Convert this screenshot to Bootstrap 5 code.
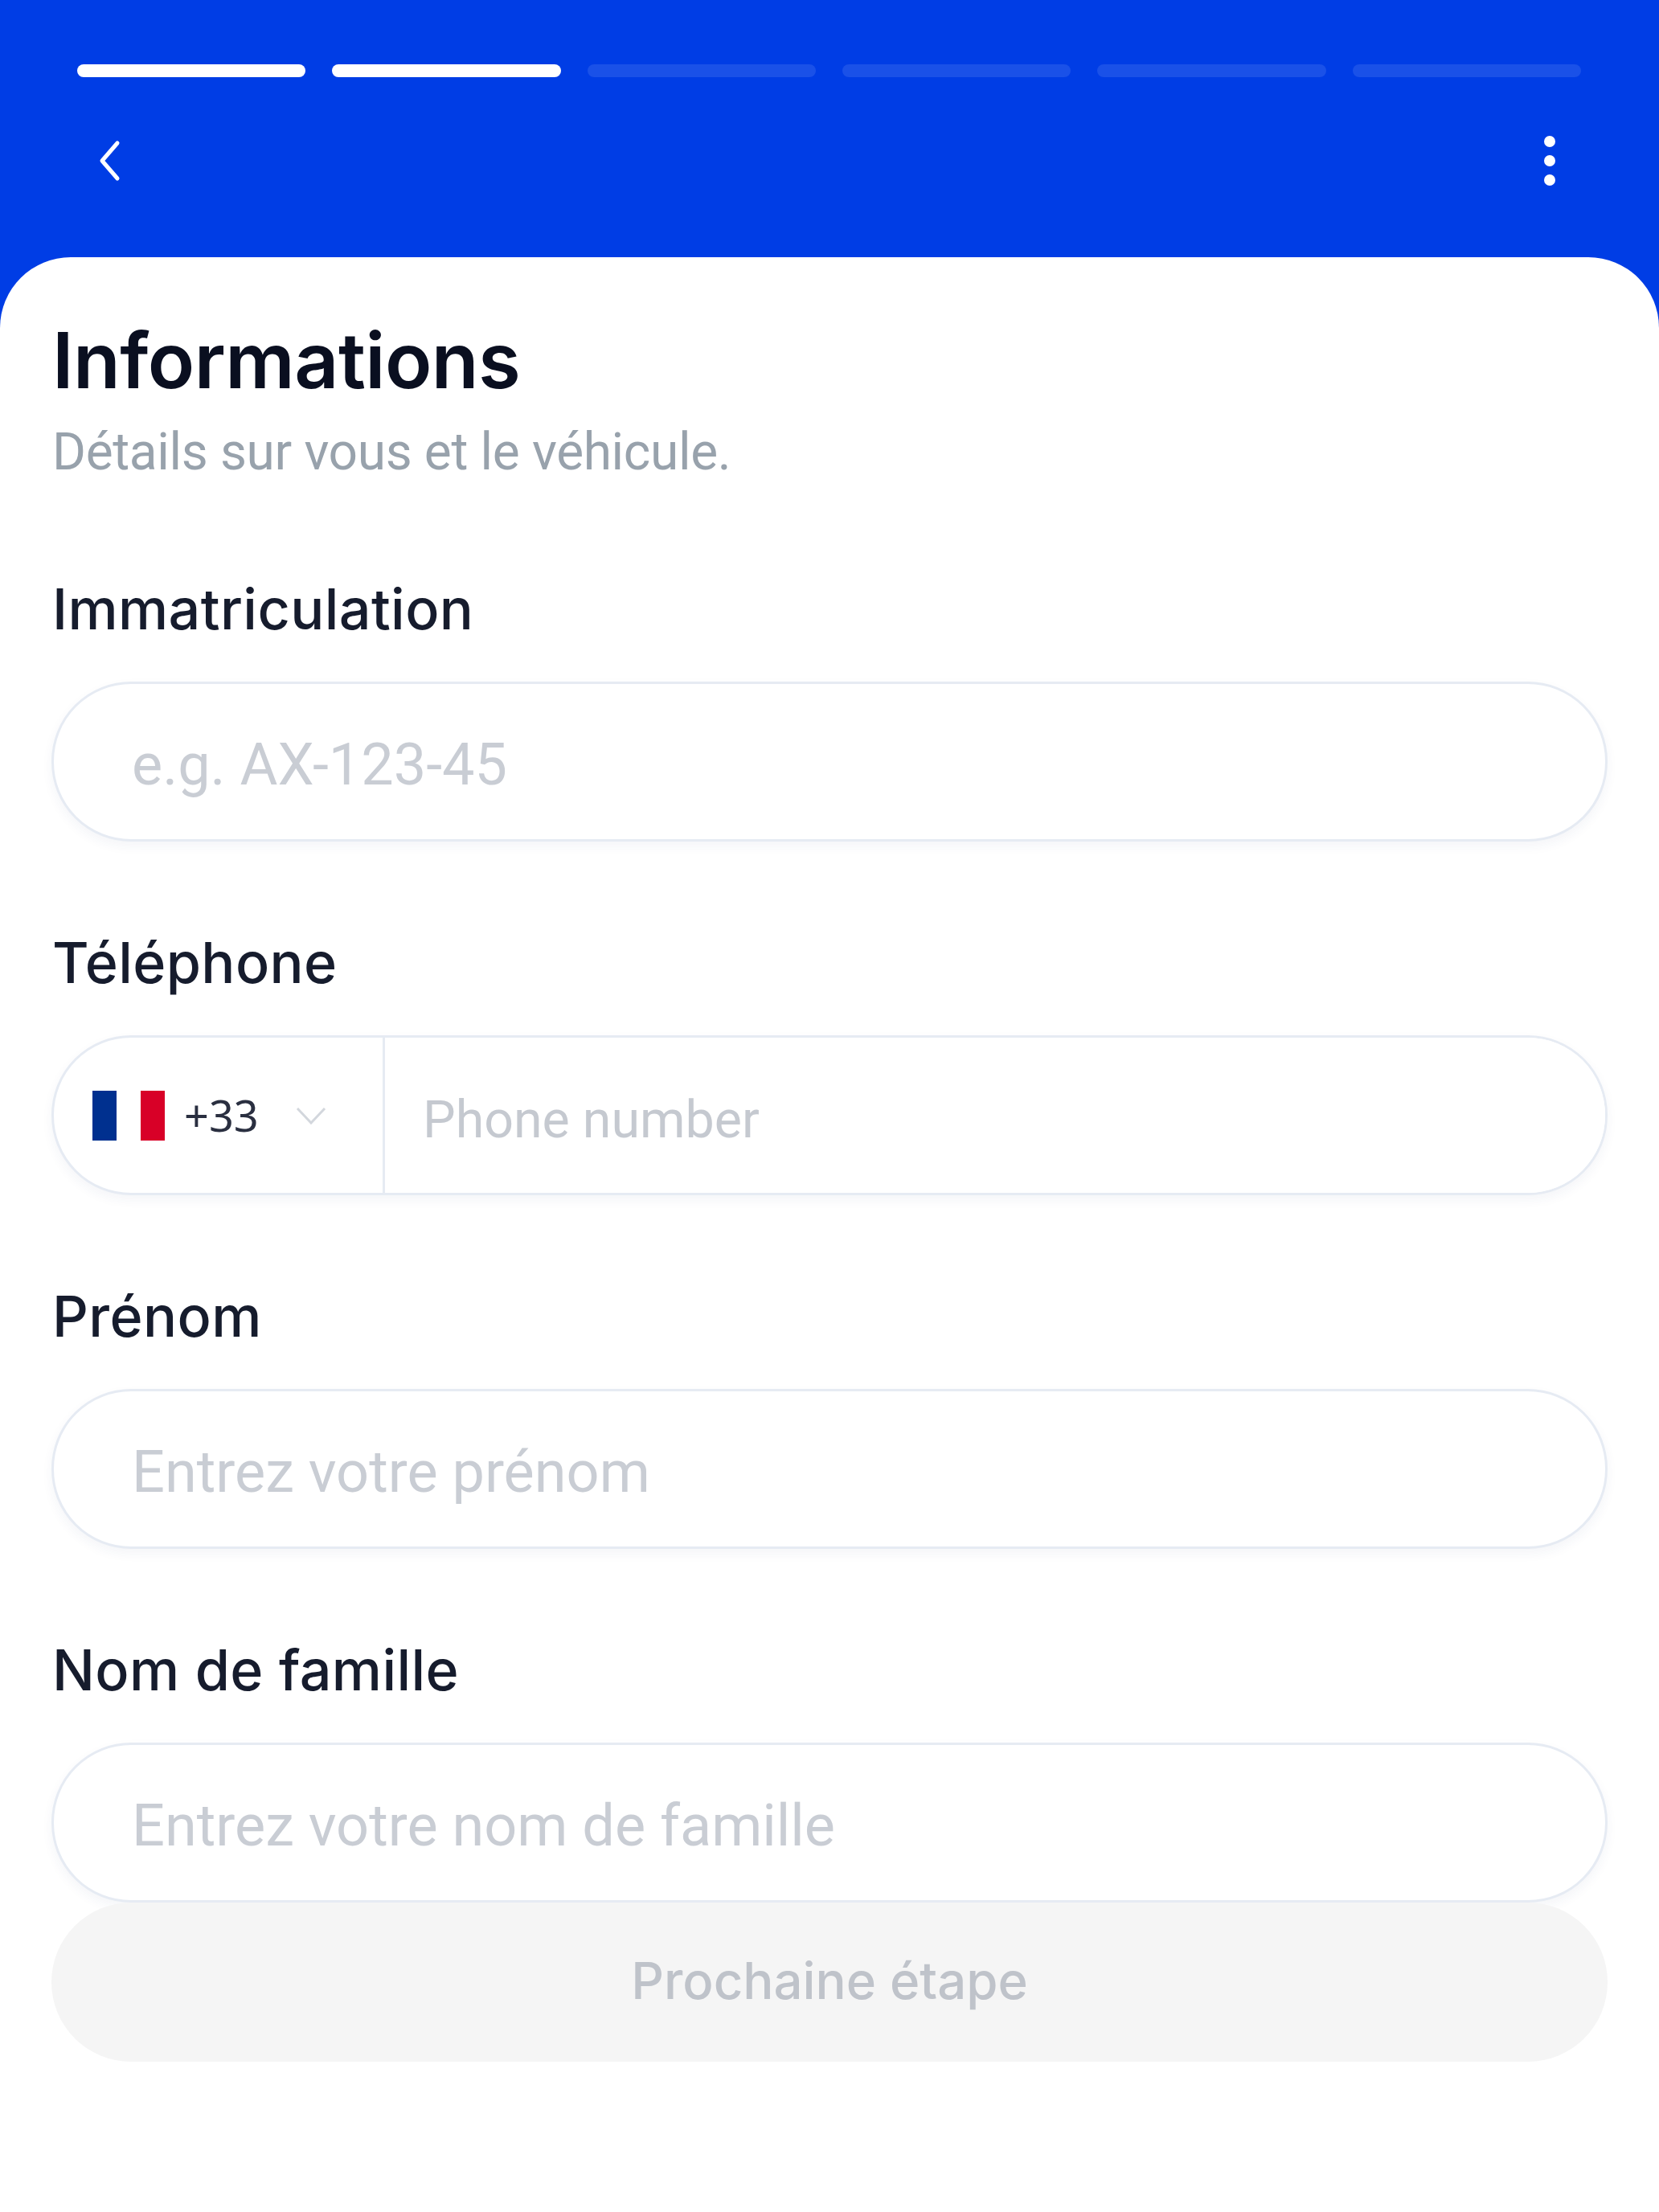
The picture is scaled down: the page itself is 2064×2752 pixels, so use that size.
<!DOCTYPE html>
<html lang="fr">
<head>
<meta charset="utf-8">
<title>Informations</title>
<link href="https://cdn.jsdelivr.net/npm/bootstrap@5.3.0/dist/css/bootstrap.min.css" rel="stylesheet">
<style>
html,body{margin:0;background:#003de5}
.screen{min-height:2752px;background:#003de5}
.top-area{height:320px;padding:80px 97px 0 96px}
.step-bars{gap:33px}
.step{height:16px;border-radius:8px;background:#1a51e8;flex:1 1 0}
.step-on{background:#fff}
.nav-row{height:60px;margin-top:74px;padding:0 0 0 26px}
.dots-icon{margin-right:32px}
.sheet{background:#fff;border-radius:88px 88px 0 0;padding:73px 64px 0 64px;min-height:2432px}
.sheet-title{font-family:Inter,sans-serif;font-weight:600;font-size:96px;line-height:110px;color:#0a0f20;margin:0 0 0 1px;letter-spacing:-.5px}
.sheet-sub{font-family:Roboto,sans-serif;font-size:64px;line-height:80px;color:#98a2ac;margin:20px 0 115px 1px;letter-spacing:-.35px}
.fld-label{display:block;font-family:Inter,sans-serif;font-weight:500;font-size:70px;line-height:80px;letter-spacing:.4px;color:#161c2d;margin:0 0 50px 1px}
.fld{margin-bottom:111px}
.fld-last{margin-bottom:0}
.pill-input.form-control{height:199px;border:3px solid #e6ebf3;border-radius:99px;padding:7px 0 0 97px;font-family:Roboto,sans-serif;font-size:72px;box-shadow:0 6px 14px rgba(40,60,110,.05);background:#fff}
.pill-input.form-control::placeholder{color:#c9cdd4;opacity:1}
.phone-box{height:199px;border:3px solid #e6ebf3;border-radius:99px;box-shadow:0 6px 14px rgba(40,60,110,.05);background:#fff;overflow:hidden}
.dial{width:412px;border-right:3px solid #e6ebf3;padding-left:48px;gap:0}
.dial-code{font-family:"Noto Sans",sans-serif;font-size:54px;color:#2a2f40;margin-left:24px}
.dial-chev{margin-left:46px}
.phone-input.form-control{border:0;border-radius:0;height:100%;padding:10px 0 0 47px;font-family:Roboto,sans-serif;font-size:64.5px;box-shadow:none}
.phone-input.form-control::placeholder{color:#c5c9d0;opacity:1}
.next-btn.btn,.next-btn.btn:disabled{display:block;width:100%;height:198px;border:0;border-radius:99px;background:#f5f5f5;color:#bfc3ca;font-family:Inter,sans-serif;font-weight:500;font-size:63.5px;opacity:1;padding:0 0 4px 0}
</style>
</head>
<body>
<div class="screen d-flex flex-column">
  <header class="top-area">
    <div class="step-bars d-flex">
      <div class="step step-on"></div><div class="step step-on"></div><div class="step"></div><div class="step"></div><div class="step"></div><div class="step"></div>
    </div>
    <div class="nav-row d-flex justify-content-between align-items-center">
      <svg width="30" height="54" viewBox="0 0 30 54" fill="none" aria-label="Retour"><path d="M24 5 5 27l19 22" stroke="#fff" stroke-width="5" stroke-linecap="round" stroke-linejoin="round"/></svg>
      <svg class="dots-icon" width="14" height="62" viewBox="0 0 14 62" fill="#fff" aria-label="Menu"><circle cx="7" cy="7" r="7"/><circle cx="7" cy="31" r="7"/><circle cx="7" cy="55" r="7"/></svg>
    </div>
  </header>
  <main class="sheet flex-grow-1">
    <h1 class="sheet-title">Informations</h1>
    <p class="sheet-sub">Détails sur vous et le véhicule.</p>
    <form>
      <div class="fld">
        <label class="fld-label" for="immat">Immatriculation</label>
        <input id="immat" class="form-control pill-input" type="text" placeholder="e.g. AX-123-45">
      </div>
      <div class="fld">
        <label class="fld-label" for="tel">Téléphone</label>
        <div class="phone-box d-flex">
          <div class="dial d-flex align-items-center flex-shrink-0">
            <svg width="90" height="62" viewBox="0 0 90 62" aria-hidden="true"><rect width="30" height="62" fill="#00308f"/><rect x="30" width="30" height="62" fill="#fff"/><rect x="60" width="30" height="62" fill="#d80027"/></svg>
            <span class="dial-code">+33</span>
            <svg class="dial-chev" width="38" height="22" viewBox="0 0 38 22" fill="none" aria-hidden="true"><path d="m2 2 17 18L36 2" stroke="#d3d7dd" stroke-width="3"/></svg>
          </div>
          <input id="tel" class="form-control phone-input" type="tel" placeholder="Phone number">
        </div>
      </div>
      <div class="fld">
        <label class="fld-label" for="prenom">Prénom</label>
        <input id="prenom" class="form-control pill-input" type="text" placeholder="Entrez votre prénom">
      </div>
      <div class="fld-last">
        <label class="fld-label" for="nom">Nom de famille</label>
        <input id="nom" class="form-control pill-input" type="text" placeholder="Entrez votre nom de famille">
      </div>
      <button class="btn next-btn" type="button" disabled>Prochaine étape</button>
    </form>
  </main>
</div>
<script src="https://cdn.jsdelivr.net/npm/bootstrap@5.3.0/dist/js/bootstrap.bundle.min.js"></script>
</body>
</html>
